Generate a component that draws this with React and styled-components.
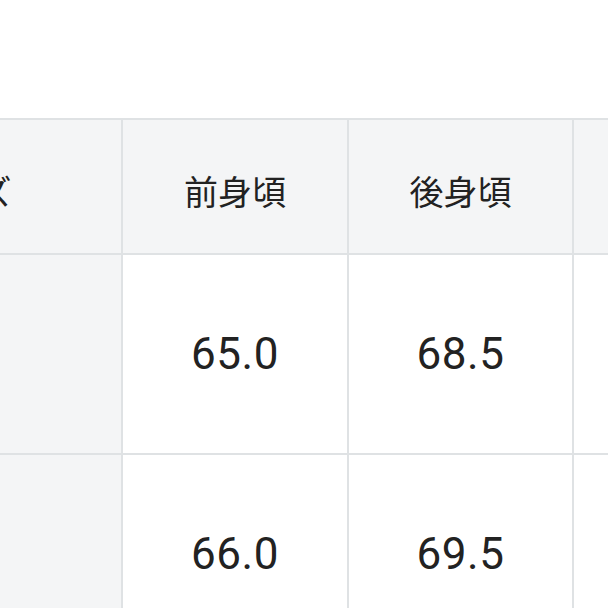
import React from "react";
import styled, { createGlobalStyle } from "styled-components";

const Global = createGlobalStyle`
  html, body { margin: 0; padding: 0; background: #ffffff; }
  body { width: 608px; height: 608px; overflow: hidden; font-family: "Roboto", "Noto Sans CJK JP", sans-serif; }
`;

const Page = styled.div`
  width: 608px;
  height: 608px;
  overflow: hidden;
  padding-top: 118px;
  box-sizing: border-box;
`;

const Grid = styled.div`
  display: grid;
  grid-template-columns: 320px 224px 223px 224px;
  grid-template-rows: 133px 198px 198px;
  gap: 2px;
  padding: 2px 0 0 0;
  margin-left: -199px;
  width: max-content;
  background: #dfe2e4;
`;

const Cell = styled.div`
  display: flex;
  align-items: center;
  justify-content: center;
  background: ${(p) => (p.$head ? "#f4f5f6" : "#ffffff")};
  color: #222222;
  font-family: ${(p) =>
    p.$head ? `"Noto Sans CJK JP", sans-serif` : `"Roboto", "Noto Sans CJK JP", sans-serif`};
  font-size: ${(p) => (p.$head ? "34px" : "44px")};
  padding-top: ${(p) => (p.$head ? "8px" : "0")};
  letter-spacing: ${(p) => (p.$head ? "0" : "0.5px")};
`;

const headers = ["サイズ", "前身頃", "後身頃", "袖丈"];
const rows = [
  ["M", "65.0", "68.5", "60.0"],
  ["L", "66.0", "69.5", "61.0"],
];

export default function App() {
  return (
    <>
      <Global />
      <Page>
        <Grid>
          {headers.map((h, i) => (
            <Cell key={h} $head>
              {i === 3 ? "" : h}
            </Cell>
          ))}
          {rows.map((r, ri) =>
            r.map((v, ci) => (
              <Cell key={`${ri}-${ci}`} $head={ci === 0}>
                {ci === 0 || ci === 3 ? "" : v}
              </Cell>
            ))
          )}
        </Grid>
      </Page>
    </>
  );
}
